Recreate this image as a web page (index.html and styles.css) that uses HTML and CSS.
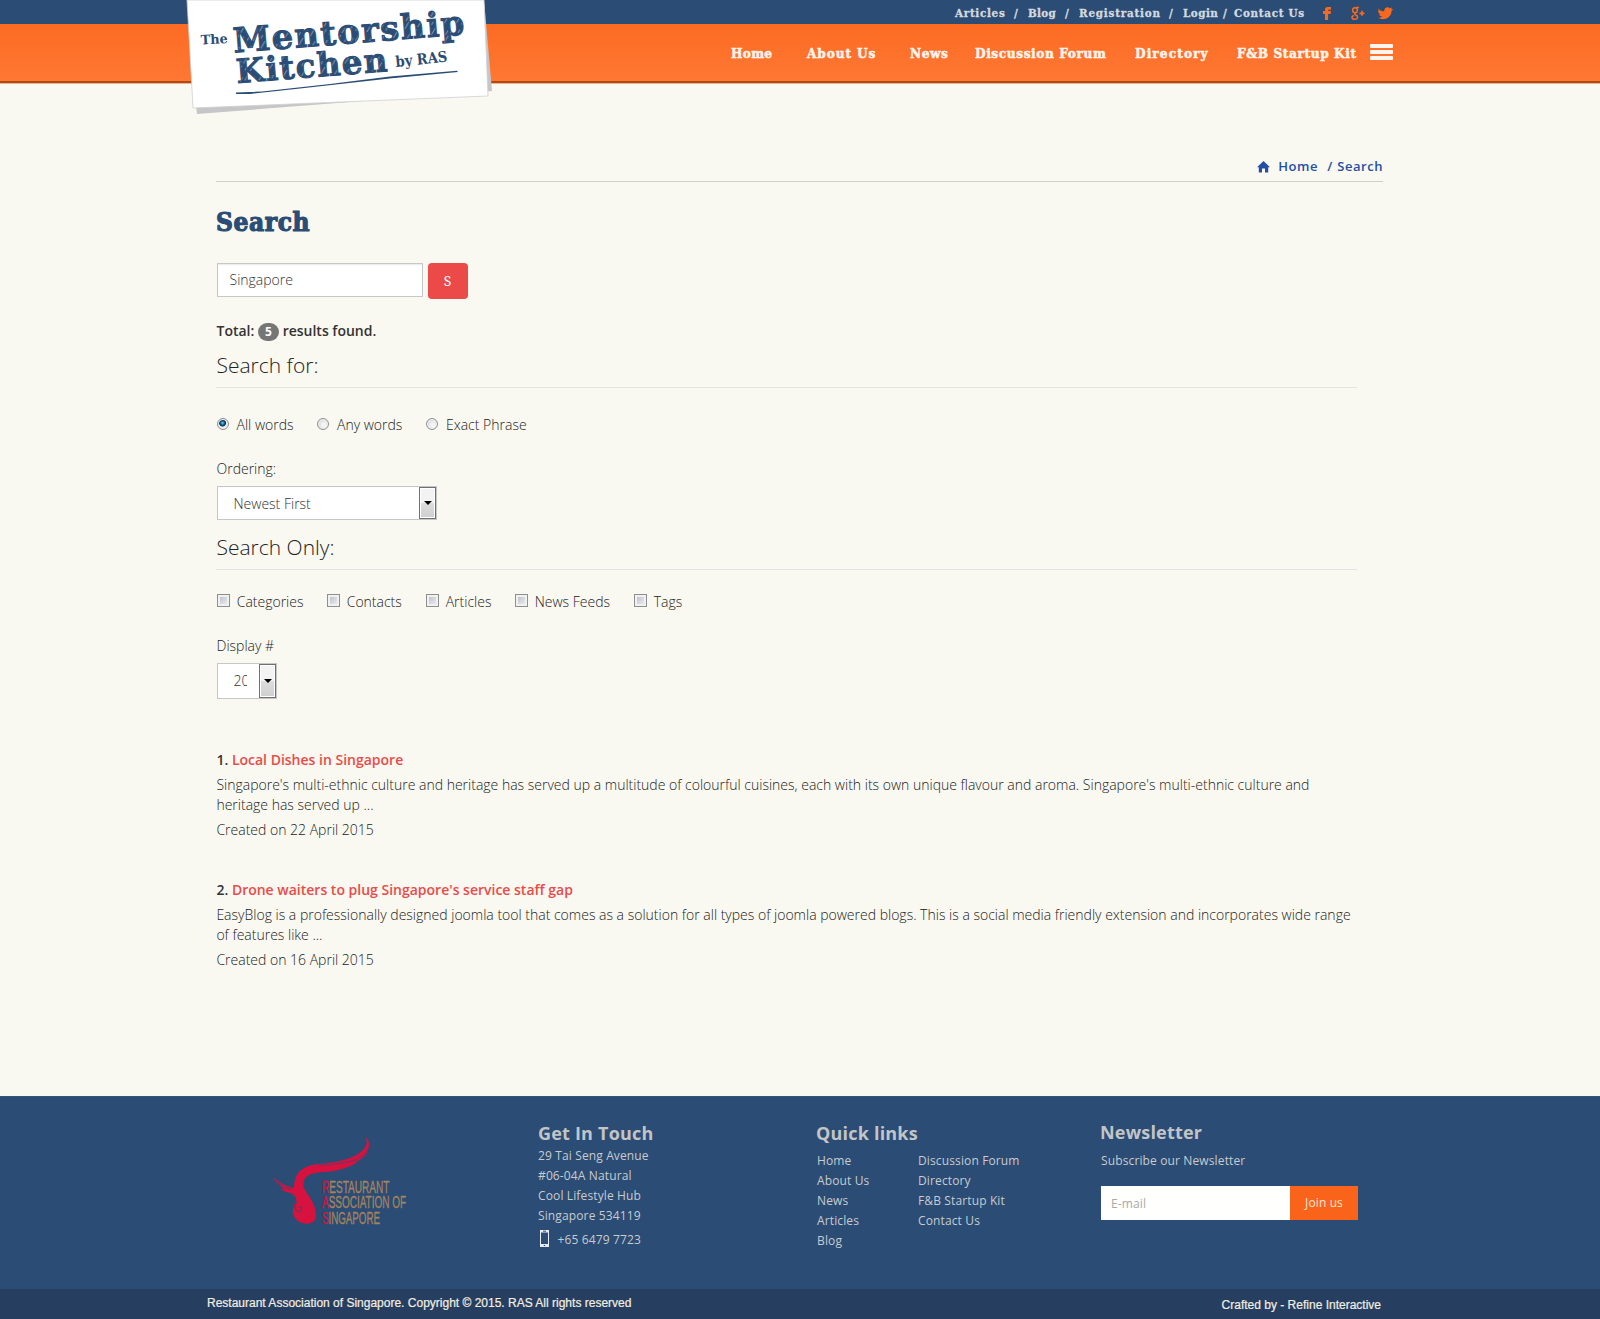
FILE: index.html
```html
<!DOCTYPE html>
<html lang="en">
<head>
<meta charset="utf-8">
<title>Search - The Mentorship Kitchen</title>
<link rel="stylesheet" href="styles.css">
</head>
<body>
<header class="header">
  <div class="topbar">
    <nav class="toplinks">
      <a class="t-articles">Articles</a><span class="t-sep">/</span>
      <a class="t-blog">Blog</a><span class="t-sep">/</span>
      <a class="t-reg">Registration</a><span class="t-sep">/</span>
      <a class="t-login">Login</a><span class="t-sep2">/</span>
      <a class="t-contact">Contact Us</a>
    </nav>
    <svg class="social" width="72" height="24" viewBox="0 0 72 24" fill="#f9681f">
      <path d="M3 20v-6H1v-3h2V9.500C3 7.900 4 7 5.600 7H9v2.800H7c-.6 0-.9.300-.9.900V11H9l-.4 3H6.100v6z"/>
      <g fill="none" stroke="#f9681f" stroke-width="1.500"><ellipse cx="33" cy="10.200" rx="2.300" ry="2.500"/><path d="M33.500 7.600H37M34 12.700c-2 1-1.500 1.800.3 2.500 2.200 1 1.800 4.100-1.500 4.100-3.500 0-3.700-3.300-.8-3.900"/><path d="M37.500 13.300H42.500M40 10.800v5" stroke-width="1.700"/></g>
      <path transform="translate(.7 .5)" d="M55.500 8.300c1.800 1.900 3.900 2.500 6 2.500-.5-3.200 3.200-5.300 5.700-3l2.200-.8-.9 1.900 2.200-.3-1.900 2.100c0 6.300-7.800 10.200-13.600 6.600 1.700.1 3.300-.4 4.300-1.300-1.700-.1-2.800-1-3.200-2.300h1.500c-1.700-.7-2.600-1.800-2.600-3.400l1.500.4c-1.200-.9-1.600-1.900-1.200-3.400z"/>
    </svg>
  </div>
  <div class="navbar">
    <nav class="mainnav">
      <a class="n-home">Home</a><a class="n-about">About Us</a><a class="n-news">News</a><a class="n-forum">Discussion Forum</a><a class="n-dir">Directory</a><a class="n-kit">F&amp;B Startup Kit</a>
    </nav>
    <div class="burger"><i></i><i></i><i></i></div>
  </div>
  <svg class="logo" width="320" height="120" viewBox="180 0 320 120">
    <defs>
      <pattern id="grain" width="19" height="17" patternUnits="userSpaceOnUse">
        <rect width="19" height="17" fill="#2b4d75"/>
        <path d="M1 7L6 0M8 15L13 8M14 6L18 1M3 16L6 12M9 5L11 2M16 15L18 12" stroke="#c3cedb" stroke-width=".7"/>
      </pattern>
    </defs>
    <path d="M484 0L492 91 197 114 190 60Z" fill="#c6c6c8"/>
    <path d="M187 0H484L488 96 193 108Z" fill="#fff" stroke="#cfcfcf" stroke-width=".8"/>
    <g class="logo-text">
      <text transform="translate(201 44.500) rotate(-3)" font-size="13" textLength="27" lengthAdjust="spacingAndGlyphs">The</text>
      <text class="big" transform="translate(234 52.500) rotate(-4.500)" font-size="34" letter-spacing="1.500" textLength="233" lengthAdjust="spacingAndGlyphs" fill="url(#grain)">Mentorship</text>
      <text class="big" transform="translate(237 83) rotate(-4.500)" font-size="33" letter-spacing="1.500" textLength="153" lengthAdjust="spacingAndGlyphs" fill="url(#grain)">Kitchen</text>
      <text transform="translate(396 67) rotate(-6)" font-size="15" textLength="52" lengthAdjust="spacingAndGlyphs">by RAS</text>
    </g>
    <path d="M236 92.500L262 91.500 330 84 390 76.500 457 70.800 458 72 392 78.300 300 88.500 250 94H236Z" fill="#2b4d75"/>
  </svg>
</header>

<main class="main">
  <div class="crumbs">
    <svg width="13" height="12" viewBox="0 0 13 12" fill="#2350a5"><path d="M6.500 0L13 6.300H11.200V11.500H8V7.500H5v4H1.800V6.300H0z"/></svg>
    <a class="c-home">Home</a><span class="c-sep">/</span><span>Search</span>
  </div>
  <h1 class="title">Search</h1>
  <div class="content">
    <div class="searchrow"><div class="field">Singapore</div><div class="go">S</div></div>
    <p class="total">Total: <span class="badge">5</span> results found.</p>
    <h2 class="legend">Search for:</h2>
    <div class="choices radios">
      <label class="w100"><i class="radio on"></i>All words</label>
      <label class="w109"><i class="radio"></i>Any words</label>
      <label><i class="radio"></i>Exact Phrase</label>
    </div>
    <p class="label">Ordering:</p>
    <div class="select wide"><span>Newest First</span><i class="drop"></i></div>
    <h2 class="legend">Search Only:</h2>
    <div class="choices checks">
      <label class="w110"><i class="check"></i>Categories</label>
      <label class="w99"><i class="check"></i>Contacts</label>
      <label class="w89"><i class="check"></i>Articles</label>
      <label class="w119"><i class="check"></i>News Feeds</label>
      <label><i class="check"></i>Tags</label>
    </div>
    <p class="label">Display #</p>
    <div class="select small"><span>20</span><i class="drop"></i></div>
    <article class="result first">
      <h3>1. <a>Local Dishes in Singapore</a></h3>
      <p>Singapore's multi-ethnic culture and heritage has served up a multitude of colourful cuisines, each with its own unique flavour and aroma. Singapore's multi-ethnic culture and<br>heritage has served up ...</p>
      <p>Created on 22 April 2015</p>
    </article>
    <article class="result">
      <h3>2. <a>Drone waiters to plug Singapore's service staff gap</a></h3>
      <p>EasyBlog is a professionally designed joomla tool that comes as a solution for all types of joomla powered blogs. This is a social media friendly extension and incorporates wide range<br>of features like ...</p>
      <p>Created on 16 April 2015</p>
    </article>
  </div>
</main>

<footer class="footer">
  <div class="f-logo">
    <svg width="140" height="92" viewBox="90 150 420 276">
      <path fill="#d8123f" d="M162 310C162 270 180 242 235 237C290 233 340 222 366 198C380 184 384 172 376 155C392 168 390 188 376 204C366 214 353 221 340 226C362 220 376 210 386 193C378 213 366 223 345 231C352 230 352 230 354 230C330 246 300 258 245 262C205 264 190 277 190 300C192 325 228 345 228 392C228 425 170 425 160 388C157 370 162 360 168 350C172 338 160 328 152 324C138 322 124 316 122 310L138 314C120 304 108 292 99 273C115 294 135 302 162 310Z"/>
      <path d="M171 350C162 362 164 378 176 381C188 381 186 362 176 366" fill="none" stroke="#2a4c75" stroke-width="3"/>
      <path d="M235 242C290 238 330 231 350 224M112 290C125 304 140 309 156 314" fill="none" stroke="#2a4c75" stroke-width="2"/>
      <g class="ras">
        <text x="246" y="323" textLength="202" lengthAdjust="spacingAndGlyphs"><tspan class="cap">R</tspan>ESTAURANT</text>
        <text x="246" y="370" textLength="252" lengthAdjust="spacingAndGlyphs"><tspan class="cap">A</tspan>SSOCIATION OF</text>
        <text x="246" y="417" textLength="174" lengthAdjust="spacingAndGlyphs"><tspan class="cap">S</tspan>INGAPORE</text>
      </g>
    </svg>
  </div>
  <section class="f-touch">
    <h4>Get In Touch</h4>
    <p>29 Tai Seng Avenue<br>#06-04A Natural<br>Cool Lifestyle Hub<br>Singapore 534119</p>
    <p class="phone"><svg width="9" height="17" viewBox="0 0 9 17"><path d="M0 0H9V17H0zM1 2.500V14H8V2.500z" fill="#e8ecef" fill-rule="evenodd"/><path d="M3 1.200H6M3.800 15.500H5.200" stroke="#2a4c75"/></svg>+65 6479 7723</p>
  </section>
  <section class="f-links">
    <h4>Quick links</h4>
    <div class="cols">
      <p>Home<br>About Us<br>News<br>Articles<br>Blog</p>
      <p>Discussion Forum<br>Directory<br>F&amp;B Startup Kit<br>Contact Us</p>
    </div>
  </section>
  <section class="f-news">
    <h4>Newsletter</h4>
    <p>Subscribe our Newsletter</p>
    <div class="join"><div class="mail">E-mail</div><div class="joinbtn">Join us</div></div>
  </section>
</footer>
<div class="copy"><span>Restaurant Association of Singapore. Copyright © 2015. RAS All rights reserved</span><span class="craft">Crafted by - Refine Interactive</span></div>
</body>
</html>
```
FILE: styles.css
```css
* { box-sizing: border-box; }
body { margin: 0; width: 1600px; height: 1319px; background: #faf9f1; color: #222; font: 300 14px/20px "Open Sans", sans-serif; overflow-x: hidden; }
h1, h2, h3, h4, p { margin: 0; }
i { display: block; }

.header { position: relative; height: 84px; }
.topbar { height: 24px; background: #2a4c75; padding-left: 955px; display: flex; }
.toplinks { width: 367px; display: flex; font: bold 11.5px/26px "DejaVu Serif Condensed", "DejaVu Serif", serif; font-stretch: condensed; color: #d5d9dd; white-space: nowrap; letter-spacing: .7px; -webkit-text-stroke: .3px #d5d9dd; }
.t-articles { width: 59px; }
.t-sep { width: 14px; }
.t-sep2 { width: 11px; }
.t-blog { width: 37px; letter-spacing: .3px; }
.t-reg { width: 90px; letter-spacing: .8px; }
.t-login { width: 40px; letter-spacing: .5px; }
.social { display: block; }
.navbar { height: 60px; padding-left: 731px; display: flex; background: linear-gradient(#fc6b22, #ff7835); border-bottom: 1px solid #d9b9a0; box-shadow: inset 0 -2px #b8460f; }
.mainnav { width: 639px; display: flex; font: bold 13.5px/59px "DejaVu Serif Condensed", "DejaVu Serif", serif; font-stretch: condensed; color: #fff4ec; white-space: nowrap; -webkit-text-stroke: .5px #fff4ec; }
.n-home { width: 76px; letter-spacing: .3px; }
.n-about { width: 103px; letter-spacing: .9px; }
.n-news { width: 65px; letter-spacing: .6px; }
.n-forum { width: 160px; letter-spacing: .6px; }
.n-dir { width: 102px; letter-spacing: 1.1px; }
.n-kit { letter-spacing: .6px; }
.burger { width: 23px; padding-top: 20px; display: flex; flex-direction: column; gap: 2px; }
.burger i { height: 4px; background: #fff4ee; border-radius: 1px; }
.logo { position: absolute; left: 180px; top: 0; }
.logo-text { font-family: "DejaVu Serif", serif; font-weight: bold; fill: #2b4d75; }
.logo-text .big { stroke: #2b4d75; stroke-width: 1px; }

.main { height: 1012px; padding: 70px 217px 0 216px; }
.crumbs { height: 28px; border-bottom: 1px solid #cfcfcb; display: flex; justify-content: flex-end; font-size: 13px; font-weight: 600; line-height: 25px; letter-spacing: .55px; color: #2350a5; }
.crumbs svg { margin: 7px 8px 0 0; }
.c-home { width: 49px; }
.c-sep { width: 10px; }
.title { height: 81px; padding-top: 20px; font: bold 26px/40px "DejaVu Serif Condensed", "DejaVu Serif", serif; font-stretch: condensed; color: #2a4c75; letter-spacing: .6px; -webkit-text-stroke: 1.1px #2a4c75; }
.content { width: 1141px; }
.searchrow { display: flex; gap: 5px; height: 58px; padding-left: 1px; }
.field { width: 206px; height: 34px; border: 1px solid #c6c6c8; background: #fff; box-shadow: inset 0 1px 1px rgba(0,0,0,.08); padding: 6px 11.5px; color: #333; }
.go { width: 40px; height: 36px; border-radius: 4px; background: #ec4a49; color: #fff; font: 14px/35px "Noto Serif", "DejaVu Serif Condensed", "DejaVu Serif", serif; text-align: center; padding-right: 1px; }
.total { font-weight: 600; height: 20px; padding-left: .5px; color: #333; }
.badge { display: inline-block; width: 21px; height: 18px; border-radius: 9px; background: #767676; color: #fff; font-size: 12px; font-weight: 700; line-height: 18px; text-align: center; vertical-align: top; margin-top: 2px; }
.legend { font-size: 21px; font-weight: 300; line-height: 30px; height: 38px; border-bottom: 1px solid #e3e3e1; padding-left: .5px; }
.total + .legend { margin-top: 9px; }
.select + .legend { margin-top: 12px; }
.choices { display: flex; height: 20px; padding-left: 1px; }
.radios { margin-top: 27px; }
.checks { margin-top: 22px; }
.choices label { display: flex; }
.w100 { width: 100px; } .w109 { width: 109px; } .w110 { width: 110px; } .w99 { width: 99px; } .w89 { width: 89px; } .w119 { width: 119px; }
.radio { width: 12px; height: 12px; margin: 3px 8px 0 0; border: 1px solid #8e8f8f; border-radius: 50%; background: radial-gradient(circle at 60% 60%, #f4f4f4 20%, #c4c8cc); box-shadow: inset 0 0 0 1px #f4f4f4; }
.radio.on { margin-right: 7.500px; background: radial-gradient(circle at 45% 40%, #6fd0f2 0, #14699b 22%, #0b2f4b 38%, #e4e8ea 48%); }
.check { width: 13px; height: 13px; margin: 2px 6.700px 0 0; border: 1px solid #8e8f8f; background: linear-gradient(135deg, #b4bac2, #f4f4f5); box-shadow: inset 0 0 0 2px #f1f1f1; }
.label { margin-top: 24px; height: 27px; padding-left: .5px; }
.select { margin-left: 1px; border: 1px solid #c6c6c8; background: #fff; display: flex; justify-content: space-between; color: #333; }
.select span { margin-left: 15.500px; overflow: hidden; }
.wide { width: 220px; height: 34px; line-height: 34px; }
.small { width: 60px; height: 36px; line-height: 34px; }
.small span { width: 13px; }
.drop { width: 17px; border: 1px solid #707070; box-shadow: inset 0 0 0 1px #fff; background: linear-gradient(#f3f3f3 48%, #dcdcdc 52%, #cfcfcf); display: flex; align-items: center; justify-content: center; }
.drop::after { content: ""; border: 4px solid transparent; border-top-color: #000; border-bottom: 0; }
.result { height: 130px; white-space: nowrap; padding-left: .4px; }
.result.first { margin-top: 51px; }
.result h3 { font-size: 14px; font-weight: 600; line-height: 20px; color: #333; }
.result a { color: #ec4a49; }
.result p { margin-top: 5px; }

.footer { height: 193px; background: #2a4c75; display: flex; color: #c9cbce; font-size: 12px; font-weight: 400; letter-spacing: .13px; border-top: 1px solid #33547c; }
.footer h4 { font-size: 18px; font-weight: 700; line-height: 24px; letter-spacing: .2px; color: #c3c4c6; }
.f-logo { width: 538px; padding: 38px 0 0 270px; letter-spacing: 0; }
.f-logo svg { overflow: visible; }
.ras { font: 50px "Liberation Sans Narrow", "Liberation Sans", sans-serif; fill: #a5835f; stroke: #a5835f; stroke-width: 1px; }
.ras .cap { fill: #d8123f; stroke: #d8123f; }
.f-touch { width: 278px; padding-top: 24px; }
.f-touch p { padding-top: 1px; }
.f-touch .phone { display: flex; margin-top: 3px; }
.phone svg { margin: 0 8.500px 0 2px; }
.f-links { width: 284px; padding-top: 24px; }
.cols { display: flex; padding: 6px 0 0 1px; }
.cols p:first-child { width: 101px; }
.f-news { padding-top: 23px; }
.f-news p { margin-top: 7px; padding-left: 1px; }
.join { display: flex; margin: 15px 0 0 1px; height: 34px; line-height: 34px; }
.mail { width: 189px; background: #fffffd; color: #a9a9a9; padding-left: 10px; line-height: 36px; }
.joinbtn { width: 68px; background: #f9641a; color: #f7e6da; text-align: center; }
.copy { height: 30px; background: #263f61; padding: 0 219px 0 207px; display: flex; justify-content: space-between; font: 12px/28px "Liberation Sans", Arial, sans-serif; color: #f3eee0; -webkit-text-stroke: .2px #f3eee0; }
.craft { padding-top: 2px; height: 30px; }
```
